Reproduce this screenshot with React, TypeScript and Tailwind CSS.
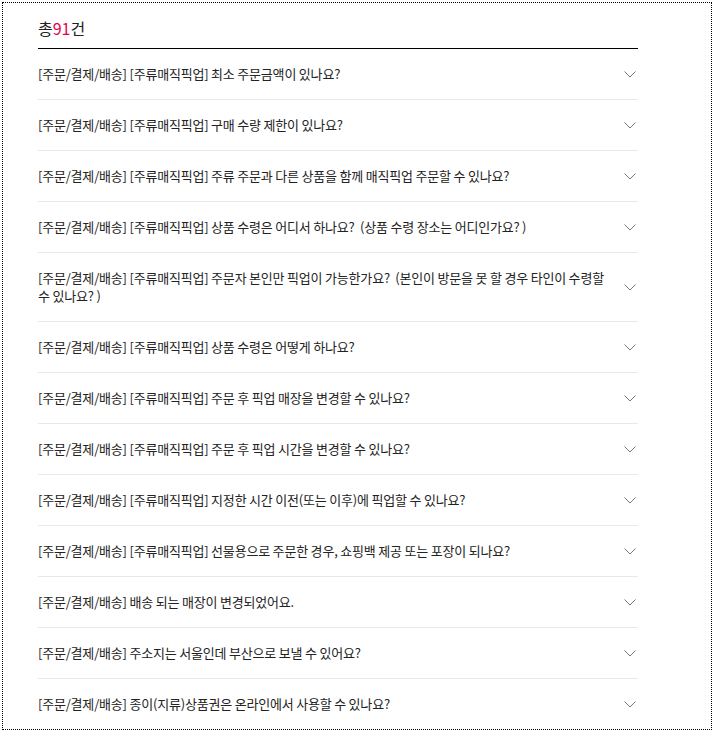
const faqs = [
  "[주문/결제/배송] [주류매직픽업] 최소 주문금액이 있나요?",
  "[주문/결제/배송] [주류매직픽업] 구매 수량 제한이 있나요?",
  "[주문/결제/배송] [주류매직픽업] 주류 주문과 다른 상품을 함께 매직픽업 주문할 수 있나요?",
  "[주문/결제/배송] [주류매직픽업] 상품 수령은 어디서 하나요?  (상품 수령 장소는 어디인가요? )",
  "[주문/결제/배송] [주류매직픽업] 주문자 본인만 픽업이 가능한가요?  (본인이 방문을 못 할 경우 타인이 수령할 수 있나요? )",
  "[주문/결제/배송] [주류매직픽업] 상품 수령은 어떻게 하나요?",
  "[주문/결제/배송] [주류매직픽업] 주문 후 픽업 매장을 변경할 수 있나요?",
  "[주문/결제/배송] [주류매직픽업] 주문 후 픽업 시간을 변경할 수 있나요?",
  "[주문/결제/배송] [주류매직픽업] 지정한 시간 이전(또는 이후)에 픽업할 수 있나요?",
  "[주문/결제/배송] [주류매직픽업] 선물용으로 주문한 경우, 쇼핑백 제공 또는 포장이 되나요?",
  "[주문/결제/배송] 배송 되는 매장이 변경되었어요.",
  "[주문/결제/배송] 주소지는 서울인데 부산으로 보낼 수 있어요?",
  "[주문/결제/배송] 종이(지류)상품권은 온라인에서 사용할 수 있나요?",
];

function Chevron() {
  return (
    <svg width="12" height="7" viewBox="0 0 12 7" className="shrink-0 mt-[1px]">
      <path d="M0.5 0.5 L6 6 L11.5 0.5" fill="none" stroke="#777" strokeWidth="1" />
    </svg>
  );
}

export default function App() {
  return (
    <div className="bg-white" style={{ fontFamily: "'Noto Sans CJK KR', 'Noto Sans', sans-serif" }}>
      <div className="m-[2px] h-[728px] overflow-hidden border border-dotted border-black">
        <div className="ml-[35px] w-[600px]">
          <div className="pt-[13px] pb-2 border-b border-black text-[16px] leading-6 text-[#222]">
            총<span className="text-[#e5004f]">91</span>건
          </div>
          <ul>
            {faqs.map((q, i) => (
              <li
                key={i}
                className="flex items-center justify-between border-b border-[#e8e8e8] py-4 pr-[2px]"
              >
                <p className="w-[570px] whitespace-pre-wrap break-keep text-[13px] leading-[18px] tracking-[-0.2px] text-[#222]">
                  {q}
                </p>
                <Chevron />
              </li>
            ))}
          </ul>
        </div>
      </div>
    </div>
  );
}
